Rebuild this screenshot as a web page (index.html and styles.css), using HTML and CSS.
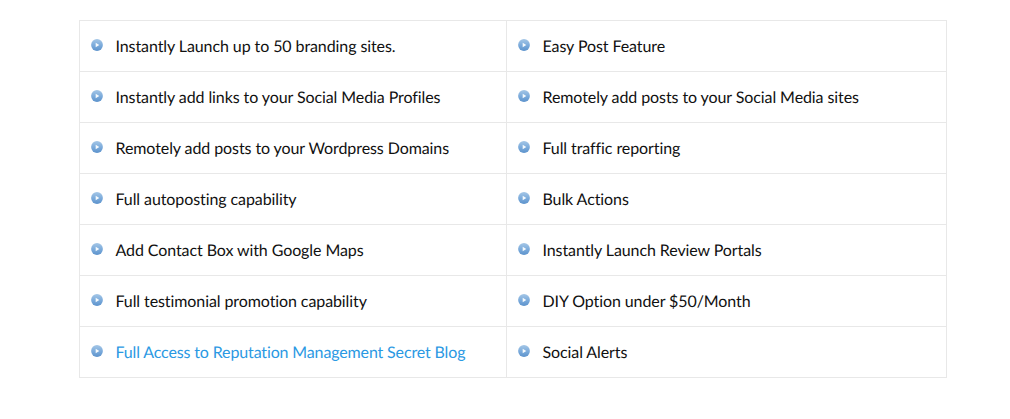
FILE: index.html
```html
<!DOCTYPE html>
<html lang="en">
<head>
<meta charset="utf-8">
<title>Features</title>
<link rel="stylesheet" href="styles.css">
</head>
<body>
<svg class="defs" width="0" height="0" aria-hidden="true">
  <defs>
    <linearGradient id="ball" x1="0.5" y1="0" x2="0.5" y2="1">
      <stop offset="0" stop-color="#a4c6e6"/>
      <stop offset="0.55" stop-color="#7aaadb"/>
      <stop offset="1" stop-color="#5d93cc"/>
    </linearGradient>
    <symbol id="bullet" viewBox="0 0 12 12">
      <circle cx="6" cy="6" r="5.9" fill="url(#ball)"/>
      <path d="M4.7 3.7 8.3 6 4.7 8.3Z" fill="#f6fafd"/>
    </symbol>
  </defs>
</svg>
<table class="features">
  <tr>
    <td><div class="item"><svg class="icon"><use href="#bullet"/></svg><span>Instantly Launch up to 50 branding sites.</span></div></td>
    <td><div class="item"><svg class="icon"><use href="#bullet"/></svg><span>Easy Post Feature</span></div></td>
  </tr>
  <tr>
    <td><div class="item"><svg class="icon"><use href="#bullet"/></svg><span>Instantly add links to your Social Media Profiles</span></div></td>
    <td><div class="item"><svg class="icon"><use href="#bullet"/></svg><span>Remotely add posts to your Social Media sites</span></div></td>
  </tr>
  <tr>
    <td><div class="item"><svg class="icon"><use href="#bullet"/></svg><span>Remotely add posts to your Wordpress Domains</span></div></td>
    <td><div class="item"><svg class="icon"><use href="#bullet"/></svg><span>Full traffic reporting</span></div></td>
  </tr>
  <tr>
    <td><div class="item"><svg class="icon"><use href="#bullet"/></svg><span>Full autoposting capability</span></div></td>
    <td><div class="item"><svg class="icon"><use href="#bullet"/></svg><span>Bulk Actions</span></div></td>
  </tr>
  <tr>
    <td><div class="item"><svg class="icon"><use href="#bullet"/></svg><span>Add Contact Box with Google Maps</span></div></td>
    <td><div class="item"><svg class="icon"><use href="#bullet"/></svg><span>Instantly Launch Review Portals</span></div></td>
  </tr>
  <tr>
    <td><div class="item"><svg class="icon"><use href="#bullet"/></svg><span>Full testimonial promotion capability</span></div></td>
    <td><div class="item"><svg class="icon"><use href="#bullet"/></svg><span>DIY Option under $50/Month</span></div></td>
  </tr>
  <tr>
    <td><div class="item"><svg class="icon"><use href="#bullet"/></svg><a class="link" href="#">Full Access to Reputation Management Secret Blog</a></div></td>
    <td><div class="item"><svg class="icon"><use href="#bullet"/></svg><span>Social Alerts</span></div></td>
  </tr>
</table>
</body>
</html>
```
FILE: styles.css
```css
html, body {
  margin: 0;
  padding: 0;
  background: #fff;
}
body {
  padding: 20px 63px 0 79px;
  font-family: "Lato", "Liberation Sans", sans-serif;
  font-size: 16px;
  color: #111;
  text-rendering: geometricPrecision;
  font-variant-ligatures: none;
  letter-spacing: -0.09px;
}
.defs {
  position: absolute;
}
.features {
  border-collapse: collapse;
  table-layout: fixed;
  width: 868px;
}
.features td {
  border: 1px solid #e8e8e8;
  height: 51px;
  padding: 1px 0 0 11px;
  box-sizing: border-box;
}
.features td:first-child {
  width: 427px;
}
.item {
  display: flex;
  align-items: center;
  gap: 12.5px;
  line-height: 24px;
}
.icon {
  width: 12px;
  height: 12px;
  flex: none;
  position: relative;
  top: -2px;
}
.link {
  color: #2b99e3;
  text-decoration: none;
  letter-spacing: -0.14px;
}
```
